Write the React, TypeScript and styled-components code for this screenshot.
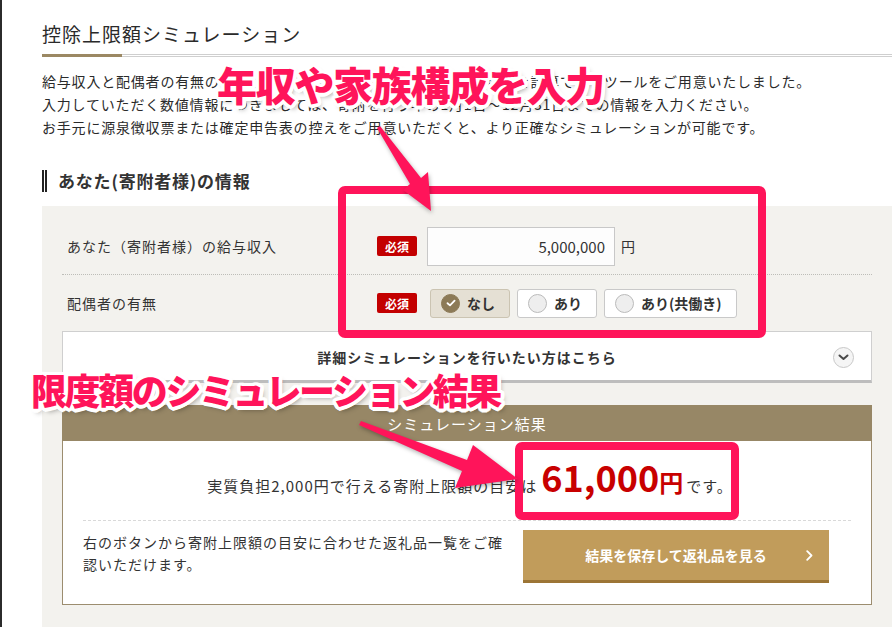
import React from "react";
import styled, { createGlobalStyle } from "styled-components";

const PINK = "#ff145a";

const GlobalStyle = createGlobalStyle`
  html, body { margin: 0; padding: 0; background: #fff; }
  body {
    font-family: "Noto Sans CJK JP", "Noto Sans", sans-serif;
    color: #333;
  }
  * { box-sizing: border-box; }
`;

const Page = styled.div`
  position: relative;
  width: 895px;
  height: 627px;
  overflow: hidden;
  border-left: 2px solid #2b2b2b;
  background: #fff;
`;

const Main = styled.main`
  margin-left: 40px;
  width: 850px;
`;

const Title = styled.h1`
  position: relative;
  margin: 0;
  padding: 19px 0 5px;
  font-size: 19px;
  line-height: 30px;
  font-weight: 400;
  letter-spacing: 1px;
  color: #2a2a2a;
  border-bottom: 3px double #cfcfcf;
  &::after {
    content: "";
    position: absolute;
    left: 0;
    bottom: -3px;
    width: 80px;
    height: 3px;
    background: #9b8863;
  }
`;

const Intro = styled.p`
  margin: 13px 0 0;
  font-size: 14px;
  line-height: 23px;
  letter-spacing: 0.8px;
  color: #2a2a2a;
`;

const SectionTitle = styled.h2`
  margin: 31px 0 14px;
  padding-left: 11px;
  border-left: 5px double #222;
  font-size: 17px;
  line-height: 22px;
  font-weight: 700;
  letter-spacing: 0.8px;
`;

const Panel = styled.section`
  background: #f3f2ee;
  padding: 12px 20px 40px;
`;

const Row = styled.div<{ $divider?: boolean }>`
  box-sizing: content-box;
  display: grid;
  grid-template-columns: 315px 1fr;
  align-items: center;
  height: 56px;
  border-bottom: ${(p) => (p.$divider ? "1px dotted #bdbdb8" : "none")};
`;

const Label = styled.div`
  padding-left: 5px;
  font-size: 14px;
  letter-spacing: 1px;
`;

const Field = styled.div`
  display: flex;
  align-items: center;
  gap: 10px;
`;

const Badge = styled.span`
  display: inline-flex;
  align-items: center;
  justify-content: center;
  width: 40px;
  height: 20px;
  border-radius: 2px;
  background: #c30000;
  color: #fff;
  font-size: 12px;
  font-weight: 700;
`;

const AmountInput = styled.input`
  width: 188px;
  height: 39px;
  margin: 0;
  padding: 0 9px;
  border: 1px solid #c8c8c8;
  background: #fdfdfd;
  text-align: right;
  font-family: "Noto Sans CJK JP", "Noto Sans", sans-serif;
  font-size: 15px;
  color: #333;
  outline: none;
`;

const Yen = styled.span`
  margin-left: -4px;
  font-size: 14px;
`;

const RadioGroup = styled.div`
  display: flex;
  gap: 7px;
  margin-left: 3px;
`;

const RadioButton = styled.label<{ $checked?: boolean }>`
  display: inline-flex;
  align-items: center;
  gap: 7px;
  height: 29px;
  padding: 0 14px 0 10px;
  border: 1px solid ${(p) => (p.$checked ? "#cbc4b2" : "#c9c9c9")};
  border-radius: 3px;
  background: ${(p) => (p.$checked ? "#e5e0d4" : "#fff")};
  font-size: 14px;
  font-weight: 700;
  color: #333;
`;

const RadioDot = styled.span<{ $checked?: boolean }>`
  display: inline-flex;
  align-items: center;
  justify-content: center;
  width: 19px;
  height: 19px;
  border-radius: 50%;
  background: ${(p) => (p.$checked ? "#8c7a57" : "#eeeeee")};
  border: 1px solid ${(p) => (p.$checked ? "#8c7a57" : "#bbbbbb")};
`;

const Accordion = styled.div`
  display: grid;
  grid-template-columns: 1fr auto 1fr;
  align-items: center;
  height: 52px;
  padding-top: 2px;
  background: #fff;
  border: 1px solid #cfcfcf;
  border-bottom: 3px solid #bdbdbd;
`;

const AccordionText = styled.span`
  grid-column: 2;
  font-size: 14px;
  font-weight: 700;
  letter-spacing: 1px;
`;

const ChevronCircle = styled.span`
  justify-self: end;
  margin-right: 17px;
  display: inline-flex;
  align-items: center;
  justify-content: center;
  width: 21px;
  height: 21px;
  border-radius: 50%;
  border: 1px solid #c8c8c8;
  background: #f5f5f5;
`;

const Result = styled.div`
  margin-top: 22px;
`;

const ResultHeader = styled.div`
  display: flex;
  align-items: center;
  justify-content: center;
  height: 36px;
  background: #978766;
  color: #fff;
  font-size: 15px;
  letter-spacing: 1px;
`;

const ResultBody = styled.div`
  background: #fff;
  border: 1px solid #9c8d6f;
  border-top: none;
  padding: 0 20px 21px;
`;

const ResultLine = styled.div`
  display: flex;
  justify-content: center;
  align-items: baseline;
  height: 80px;
  padding: 9px 0 0 6px;
  border-bottom: 1px dashed #d9d9d9;
`;

const ResultText = styled.span`
  font-size: 15px;
  letter-spacing: 1px;
`;

const Amount = styled.span`
  margin-left: 4px;
  font-size: 36px;
  font-weight: 700;
  color: #c80000;
`;

const AmountUnit = styled.span`
  font-size: 24px;
  font-weight: 700;
  color: #c80000;
  margin-right: 3px;
`;

const BottomRow = styled.div`
  display: flex;
  justify-content: space-between;
  align-items: flex-start;
  padding: 9px 22px 0 0;
`;

const Note = styled.p`
  margin: 1px 0 0;
  width: 430px;
  font-size: 14px;
  line-height: 22px;
  letter-spacing: 1px;
`;

const SaveButton = styled.button`
  display: grid;
  grid-template-columns: 1fr auto 1fr;
  align-items: center;
  width: 306px;
  height: 53px;
  margin: 0;
  padding: 0;
  border: none;
  border-bottom: 3px solid #9c7535;
  background: #c19c5b;
  color: #fff;
  font-family: "Noto Sans CJK JP", "Noto Sans", sans-serif;
  font-size: 14px;
  font-weight: 700;
`;

const ButtonLabel = styled.span`
  grid-column: 2;
`;

const ButtonArrow = styled.span`
  justify-self: end;
  margin-right: 16px;
  display: inline-flex;
`;

/* ---------- annotation overlay ---------- */

const Overlay = styled.div`
  position: absolute;
  inset: 0;
  pointer-events: none;
`;

const Frame = styled.div`
  position: absolute;
  border: 8px solid ${PINK};
  border-radius: 7px;
`;

const outline = (() => {
  const parts: string[] = [];
  const r = 3.5;
  for (let i = 0; i < 24; i++) {
    const a = (i / 24) * Math.PI * 2;
    parts.push(`${(Math.cos(a) * r).toFixed(2)}px ${(Math.sin(a) * r).toFixed(2)}px 0 #fff`);
  }
  parts.push("3px 4px 5px rgba(0,0,0,0.35)");
  return parts.join(", ");
})();

const Callout = styled.div<{ $size: number; $spacing: number }>`
  position: absolute;
  white-space: nowrap;
  font-family: "Noto Sans CJK JP", "Noto Sans", sans-serif;
  font-weight: 900;
  font-size: ${(p) => p.$size}px;
  line-height: 1;
  letter-spacing: ${(p) => p.$spacing}px;
  color: ${PINK};
  text-shadow: ${outline};
`;

const ArrowLayer = styled.svg`
  position: absolute;
  left: 0;
  top: 0;
  filter: drop-shadow(1px 2px 2px rgba(0, 0, 0, 0.3));
`;

export default function App() {
  return (
    <>
      <GlobalStyle />
      <Page>
        <Main>
          <Title>控除上限額シミュレーション</Title>
          <Intro>
            給与収入と配偶者の有無の情報から、ふるさと納税の寄附上限額の目安を計算できるツールをご用意いたしました。
            <br />
            入力していただく数値情報につきましては、寄附を行う年の1月1日〜12月31日までの情報を入力ください。
            <br />
            お手元に源泉徴収票または確定申告表の控えをご用意いただくと、より正確なシミュレーションが可能です。
          </Intro>
          <SectionTitle>あなた(寄附者様)の情報</SectionTitle>
          <Panel>
            <Row $divider>
              <Label>あなた（寄附者様）の給与収入</Label>
              <Field>
                <Badge>必須</Badge>
                <AmountInput value="5,000,000" readOnly />
                <Yen>円</Yen>
              </Field>
            </Row>
            <Row>
              <Label>配偶者の有無</Label>
              <Field>
                <Badge>必須</Badge>
                <RadioGroup>
                  <RadioButton $checked>
                    <RadioDot $checked>
                      <svg width="10" height="8" viewBox="0 0 10 8">
                        <path d="M1.5 4.2 L4 6.4 L8.6 1.6" fill="none" stroke="#fff" strokeWidth="1.8" strokeLinecap="round" strokeLinejoin="round" />
                      </svg>
                    </RadioDot>
                    なし
                  </RadioButton>
                  <RadioButton>
                    <RadioDot />
                    あり
                  </RadioButton>
                  <RadioButton>
                    <RadioDot />
                    あり(共働き)
                  </RadioButton>
                </RadioGroup>
              </Field>
            </Row>
            <Accordion>
              <AccordionText>詳細シミュレーションを行いたい方はこちら</AccordionText>
              <ChevronCircle>
                <svg width="11" height="7" viewBox="0 0 11 7">
                  <path d="M1.5 1.5 L5.5 5 L9.5 1.5" fill="none" stroke="#4a4a4a" strokeWidth="2" strokeLinecap="round" strokeLinejoin="round" />
                </svg>
              </ChevronCircle>
            </Accordion>
            <Result>
              <ResultHeader>シミュレーション結果</ResultHeader>
              <ResultBody>
                <ResultLine>
                  <ResultText>実質負担2,000円で行える寄附上限額の目安は</ResultText>
                  <Amount>61,000</Amount>
                  <AmountUnit>円</AmountUnit>
                  <ResultText>です。</ResultText>
                </ResultLine>
                <BottomRow>
                  <Note>右のボタンから寄附上限額の目安に合わせた返礼品一覧をご確認いただけます。</Note>
                  <SaveButton type="button">
                    <ButtonLabel>結果を保存して返礼品を見る</ButtonLabel>
                    <ButtonArrow>
                      <svg width="7" height="11" viewBox="0 0 7 11">
                        <path d="M1.2 1.2 L5.5 5.5 L1.2 9.8" fill="none" stroke="#fff" strokeWidth="1.8" strokeLinecap="round" strokeLinejoin="round" />
                      </svg>
                    </ButtonArrow>
                  </SaveButton>
                </BottomRow>
              </ResultBody>
            </Result>
          </Panel>
        </Main>

        <Overlay>
          <Frame style={{ left: 336, top: 186, width: 428, height: 152 }} />
          <Frame style={{ left: 513, top: 442, width: 224, height: 78 }} />
          <ArrowLayer width="895" height="627" viewBox="0 0 895 627">
            <polygon
              points="375,128 408,184 401,190 429,211 426,172 419,178 378,126"
              fill={PINK}
            />
            <polygon
              points="359,421 465,460 471,445 516,479 453,488 460,471 357,425"
              fill={PINK}
            />
          </ArrowLayer>
          <Callout $size={40} $spacing={-1.3} style={{ left: 215, top: 64 }}>
            年収や家族構成を入力
          </Callout>
          <Callout $size={36} $spacing={-2.4} style={{ left: 29, top: 371 }}>
            限度額のシミュレーション結果
          </Callout>
        </Overlay>
      </Page>
    </>
  );
}
